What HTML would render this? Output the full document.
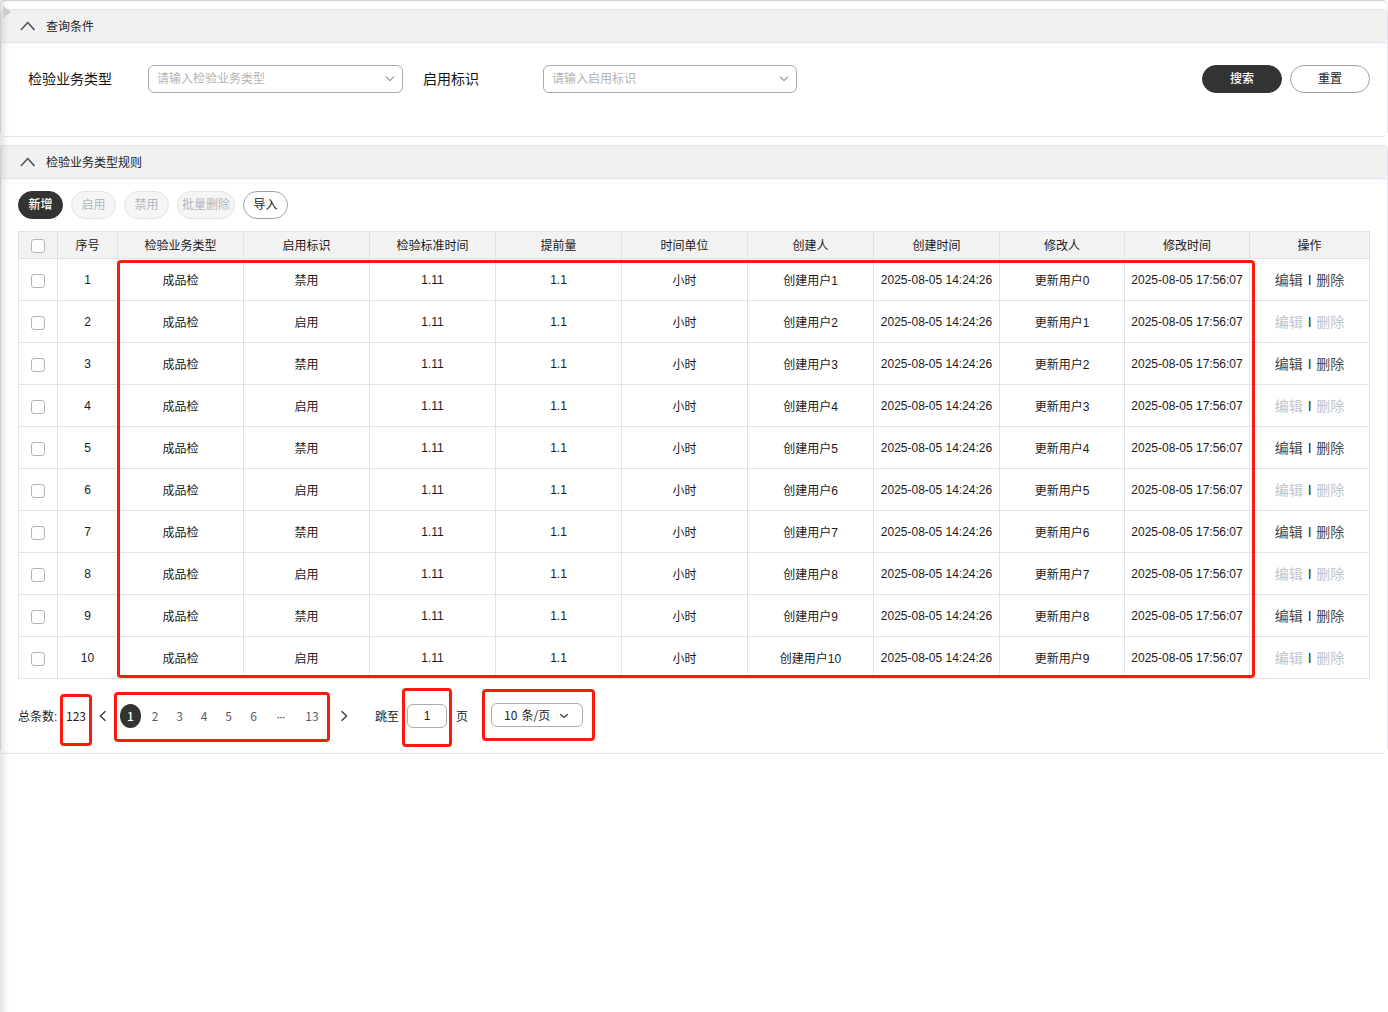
<!DOCTYPE html>
<html lang="zh-CN">
<head>
<meta charset="utf-8">
<title>检验业务类型规则</title>
<style>
*{box-sizing:border-box;margin:0;padding:0}
html,body{width:1388px;height:1012px;overflow:hidden;background:#fff}
body{position:relative;font-family:"Liberation Sans","Noto Sans CJK SC",sans-serif;font-size:12px;color:#1f1f1f}
.abs{position:absolute}
.lshadow{left:0;top:0;width:15px;height:1012px;background:linear-gradient(90deg,rgba(0,0,0,.11) 0,rgba(0,0,0,.085) 2px,rgba(0,0,0,.04) 5px,rgba(0,0,0,.01) 8px,rgba(0,0,0,0) 11px);z-index:5;pointer-events:none}
.tri{left:3px;top:6px;width:0;height:0;border-left:8px solid #cdcdcd;border-top:6.5px solid transparent;border-bottom:6.5px solid transparent;z-index:6}
.panel{left:0;width:1388px;border:1px solid #e1e3ea;border-radius:4px;background:#fff}
.panel::before,.panel::after{content:'';position:absolute;bottom:-1px;width:3px;height:4px;background:#fff}
.panel::before{left:-1px}
.panel::after{right:-1px}
.phead{left:0;top:0;width:1386px;height:32px;background:#f1f1f1;border-radius:3px 3px 4px 4px}
.phead::after{content:'';position:absolute;left:0;right:0;top:32px;height:1px;background:#e1e3ea}
.phead svg{position:absolute;left:18px;top:11px}
.phead span{position:absolute;left:45px;top:0;line-height:34px;font-size:12px;color:#222}
.lbl{font-size:14px;line-height:28px;color:#111;top:65px}
.sel{top:65px;height:28px;width:255px;border:1px solid #a9abb3;border-radius:6px;background:#fff}
.sel span{position:absolute;left:8px;top:0;line-height:27px;font-size:12px;color:#b3b3b3}
.sel svg{position:absolute;right:7px;top:9px}
.btn{height:28px;border-radius:14px;font-size:12px;line-height:27px;text-align:center;border:1px solid #333}
.btn.pri{background:#333;color:#fff;font-weight:500}
.btn.pln{background:#fff;color:#222;border-color:#9fa3ae}
.btn.off{background:#f5f5f5;color:#b2b6bf;border-color:#e1e3e9}
.tbl{left:18px;top:231px;width:1352px;border-left:1px solid #e0e2e9;border-top:1px solid #e0e2e9}
.tr{display:grid;grid-template-columns:39px 60px 126px 126px 126px 126px 126px 126px 126px 125px 125px 120px;height:42px}
.tr.th{height:27px;background:#f2f2f2}
.tr.th .td{padding-bottom:2px}
.tr.th .td .cb{top:2px}
.td{border-right:1px solid #e0e2e9;border-bottom:1px solid #e0e2e9;display:flex;align-items:center;justify-content:center;white-space:nowrap;font-size:12px;color:#1a1a1a}
.cb{display:block;width:14px;height:14px;border:1px solid #b4b6bd;border-radius:3px;background:#fff;position:relative;top:1px}
.op{font-size:14px;color:#4a4a4a;padding-bottom:2px}
.op .sep{margin:0 5px 0 5.5px;font-size:10.5px;color:#333;position:relative;top:0.5px;font-weight:bold}
.op.dis .lk{color:#bfc3cb}
.red{border:3px solid #fb1a0e;border-radius:4px;z-index:4}
.pg{top:704px;height:24px;line-height:24px;font-family:"Noto Sans CJK SC","Liberation Sans",sans-serif;font-size:12px;color:#5a5e66;text-align:center}
</style>
</head>
<body>
<div class="abs" style="left:0;top:0;width:1388px;height:10px;border-left:1px solid #f4f4f4;border-right:1px solid #ececec;border-top:1px solid #d2d2d2;border-radius:5px 6px 0 0"></div>

<!-- query panel -->
<div class="abs panel" style="top:9px;height:128px">
  <div class="abs phead"><svg width="16" height="10" viewBox="0 0 16 10"><path d="M1.9 8.9 L8.7 1.6 L15.5 8.9" fill="none" stroke="#4b4f5d" stroke-width="1.5"/></svg><span>查询条件</span></div>
</div>
<div class="abs lbl" style="left:28px">检验业务类型</div>
<div class="abs sel" style="left:148px"><span>请输入检验业务类型</span><svg width="10" height="8" viewBox="0 0 10 8"><path d="M1.1 1.5 L5 5.7 L8.9 1.5" fill="none" stroke="#555966" stroke-width="1"/></svg></div>
<div class="abs lbl" style="left:423px">启用标识</div>
<div class="abs sel" style="left:543px;width:254px"><span>请输入启用标识</span><svg width="10" height="8" viewBox="0 0 10 8"><path d="M1.1 1.5 L5 5.7 L8.9 1.5" fill="none" stroke="#555966" stroke-width="1"/></svg></div>
<div class="abs btn pri" style="left:1202px;top:65px;width:80px">搜索</div>
<div class="abs btn pln" style="left:1290px;top:65px;width:80px">重置</div>

<!-- rule panel -->
<div class="abs panel" style="top:145px;height:609px">
  <div class="abs phead"><svg width="16" height="10" viewBox="0 0 16 10"><path d="M1.9 8.9 L8.7 1.6 L15.5 8.9" fill="none" stroke="#4b4f5d" stroke-width="1.5"/></svg><span>检验业务类型规则</span></div>
</div>
<div class="abs btn pri" style="left:18px;top:191px;width:45px">新增</div>
<div class="abs btn off" style="left:71px;top:191px;width:45px">启用</div>
<div class="abs btn off" style="left:124px;top:191px;width:45px">禁用</div>
<div class="abs btn off" style="left:177px;top:191px;width:58px">批量删除</div>
<div class="abs btn pln" style="left:243px;top:191px;width:45px">导入</div>

<div class="abs tbl">
<div class="tr th">
<div class="td"><i class="cb"></i></div><div class="td">序号</div><div class="td">检验业务类型</div><div class="td">启用标识</div><div class="td">检验标准时间</div><div class="td">提前量</div><div class="td">时间单位</div><div class="td">创建人</div><div class="td">创建时间</div><div class="td">修改人</div><div class="td">修改时间</div><div class="td">操作</div>
</div>
<div class="tr">
<div class="td"><i class="cb"></i></div><div class="td">1</div><div class="td">成品检</div><div class="td">禁用</div><div class="td">1.11</div><div class="td">1.1</div><div class="td">小时</div><div class="td">创建用户1</div><div class="td">2025-08-05 14:24:26</div><div class="td">更新用户0</div><div class="td">2025-08-05 17:56:07</div><div class="td op"><span class="lk">编辑</span><span class="sep">|</span><span class="lk">删除</span></div>
</div>
<div class="tr">
<div class="td"><i class="cb"></i></div><div class="td">2</div><div class="td">成品检</div><div class="td">启用</div><div class="td">1.11</div><div class="td">1.1</div><div class="td">小时</div><div class="td">创建用户2</div><div class="td">2025-08-05 14:24:26</div><div class="td">更新用户1</div><div class="td">2025-08-05 17:56:07</div><div class="td op dis"><span class="lk">编辑</span><span class="sep">|</span><span class="lk">删除</span></div>
</div>
<div class="tr">
<div class="td"><i class="cb"></i></div><div class="td">3</div><div class="td">成品检</div><div class="td">禁用</div><div class="td">1.11</div><div class="td">1.1</div><div class="td">小时</div><div class="td">创建用户3</div><div class="td">2025-08-05 14:24:26</div><div class="td">更新用户2</div><div class="td">2025-08-05 17:56:07</div><div class="td op"><span class="lk">编辑</span><span class="sep">|</span><span class="lk">删除</span></div>
</div>
<div class="tr">
<div class="td"><i class="cb"></i></div><div class="td">4</div><div class="td">成品检</div><div class="td">启用</div><div class="td">1.11</div><div class="td">1.1</div><div class="td">小时</div><div class="td">创建用户4</div><div class="td">2025-08-05 14:24:26</div><div class="td">更新用户3</div><div class="td">2025-08-05 17:56:07</div><div class="td op dis"><span class="lk">编辑</span><span class="sep">|</span><span class="lk">删除</span></div>
</div>
<div class="tr">
<div class="td"><i class="cb"></i></div><div class="td">5</div><div class="td">成品检</div><div class="td">禁用</div><div class="td">1.11</div><div class="td">1.1</div><div class="td">小时</div><div class="td">创建用户5</div><div class="td">2025-08-05 14:24:26</div><div class="td">更新用户4</div><div class="td">2025-08-05 17:56:07</div><div class="td op"><span class="lk">编辑</span><span class="sep">|</span><span class="lk">删除</span></div>
</div>
<div class="tr">
<div class="td"><i class="cb"></i></div><div class="td">6</div><div class="td">成品检</div><div class="td">启用</div><div class="td">1.11</div><div class="td">1.1</div><div class="td">小时</div><div class="td">创建用户6</div><div class="td">2025-08-05 14:24:26</div><div class="td">更新用户5</div><div class="td">2025-08-05 17:56:07</div><div class="td op dis"><span class="lk">编辑</span><span class="sep">|</span><span class="lk">删除</span></div>
</div>
<div class="tr">
<div class="td"><i class="cb"></i></div><div class="td">7</div><div class="td">成品检</div><div class="td">禁用</div><div class="td">1.11</div><div class="td">1.1</div><div class="td">小时</div><div class="td">创建用户7</div><div class="td">2025-08-05 14:24:26</div><div class="td">更新用户6</div><div class="td">2025-08-05 17:56:07</div><div class="td op"><span class="lk">编辑</span><span class="sep">|</span><span class="lk">删除</span></div>
</div>
<div class="tr">
<div class="td"><i class="cb"></i></div><div class="td">8</div><div class="td">成品检</div><div class="td">启用</div><div class="td">1.11</div><div class="td">1.1</div><div class="td">小时</div><div class="td">创建用户8</div><div class="td">2025-08-05 14:24:26</div><div class="td">更新用户7</div><div class="td">2025-08-05 17:56:07</div><div class="td op dis"><span class="lk">编辑</span><span class="sep">|</span><span class="lk">删除</span></div>
</div>
<div class="tr">
<div class="td"><i class="cb"></i></div><div class="td">9</div><div class="td">成品检</div><div class="td">禁用</div><div class="td">1.11</div><div class="td">1.1</div><div class="td">小时</div><div class="td">创建用户9</div><div class="td">2025-08-05 14:24:26</div><div class="td">更新用户8</div><div class="td">2025-08-05 17:56:07</div><div class="td op"><span class="lk">编辑</span><span class="sep">|</span><span class="lk">删除</span></div>
</div>
<div class="tr">
<div class="td"><i class="cb"></i></div><div class="td">10</div><div class="td">成品检</div><div class="td">启用</div><div class="td">1.11</div><div class="td">1.1</div><div class="td">小时</div><div class="td">创建用户10</div><div class="td">2025-08-05 14:24:26</div><div class="td">更新用户9</div><div class="td">2025-08-05 17:56:07</div><div class="td op dis"><span class="lk">编辑</span><span class="sep">|</span><span class="lk">删除</span></div>
</div>
</div>

<!-- red annotation boxes -->
<div class="abs red" style="left:117px;top:260px;width:1138px;height:418px"></div>
<div class="abs red" style="left:60px;top:694px;width:32px;height:52px"></div>
<div class="abs red" style="left:114px;top:692px;width:216px;height:50px"></div>
<div class="abs red" style="left:402px;top:688px;width:50px;height:59px"></div>
<div class="abs red" style="left:482px;top:689px;width:113px;height:52px"></div>

<!-- pagination -->
<div class="abs" style="left:18px;top:705px;line-height:24px;font-size:12px;color:#222">总条数:</div>
<div class="abs pg" style="left:64px;width:24px;color:#222">123</div>
<svg class="abs" style="left:98px;top:710px" width="10" height="12" viewBox="0 0 10 12"><path d="M7.4 1.2 L2.4 6 L7.4 10.8" fill="none" stroke="#333" stroke-width="1.3"/></svg>
<div class="abs pg" style="left:120px;width:21px;background:#333;color:#fff;border-radius:10.5px/12px;font-weight:500">1</div>
<div class="abs pg" style="left:145px;width:20px">2</div>
<div class="abs pg" style="left:169.5px;width:20px">3</div>
<div class="abs pg" style="left:194px;width:20px">4</div>
<div class="abs pg" style="left:218.5px;width:20px">5</div>
<div class="abs pg" style="left:243.5px;width:20px">6</div>
<div class="abs pg" style="left:271px;top:705.5px;width:20px;font-size:9px;color:#4a4a4a;font-weight:bold;letter-spacing:-0.3px;font-family:'Liberation Sans',sans-serif">···</div>
<div class="abs pg" style="left:300px;width:24px">13</div>
<svg class="abs" style="left:339px;top:710px" width="10" height="12" viewBox="0 0 10 12"><path d="M2.6 1.2 L7.6 6 L2.6 10.8" fill="none" stroke="#333" stroke-width="1.3"/></svg>
<div class="abs" style="left:375px;top:705px;line-height:24px;font-size:12px;color:#222">跳至</div>
<div class="abs" style="left:407px;top:704px;width:40px;height:24px;border:1px solid #a9abb3;border-radius:6px;background:#fff;text-align:center;line-height:22px;font-size:12px;color:#222">1</div>
<div class="abs" style="left:456px;top:705px;line-height:24px;font-size:12px;color:#222">页</div>
<div class="abs" style="left:491px;top:703px;width:92px;height:24px;border:1px solid #a9abb3;border-radius:6px;background:#fff"><span class="abs" style="left:12px;top:0;line-height:22px;font-size:12px;color:#222;font-family:'Noto Sans CJK SC','Liberation Sans',sans-serif;white-space:nowrap"><b style="font-weight:normal;margin-right:1.5px">10 </b>条/页</span><svg class="abs" style="left:67px;top:8px" width="10" height="8" viewBox="0 0 10 8"><path d="M1.3 2.3 L5 5.5 L8.7 2.3" fill="none" stroke="#333" stroke-width="1.2"/></svg></div>

<div class="abs lshadow"></div>
<div class="abs tri"></div>
</body>
</html>
